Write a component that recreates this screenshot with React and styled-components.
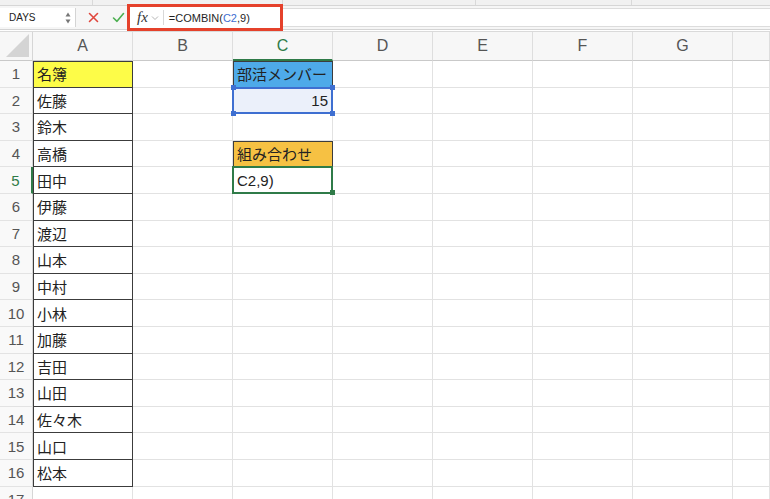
import React from 'react';
import styled, { createGlobalStyle } from 'styled-components';

const GlobalStyle = createGlobalStyle`
  * { box-sizing: border-box; }
  html, body { margin: 0; padding: 0; background: #fff; overflow: hidden; }
  body { font-family: "Liberation Sans", "Noto Sans CJK JP", sans-serif; }
`;

const Page = styled.div`
  width: 770px;
  height: 499px;
  overflow: hidden;
  display: flex;
  flex-direction: column;
`;

const TopStrip = styled.div`
  height: 6px;
  flex: none;
  display: grid;
  grid-template-columns: 93px 190px 193px 156px 1fr;
  background: #f1f1f1;
  border-bottom: 1px solid #d6d6d6;
`;

const StripPart = styled.div`
  border-right: 1px solid #d9d9d9;
  &:last-child { border-right: none; }
`;

const FormulaBar = styled.div`
  height: 24px;
  flex: none;
  display: flex;
  align-items: center;
  background: #f6f6f6;
  border-bottom: 1px solid #d4d4d4;
`;

const NameBox = styled.div`
  width: 76px;
  height: 19px;
  display: flex;
  align-items: center;
  justify-content: space-between;
  padding: 0 4px 0 9px;
  background: #fff;
  border-right: 1px solid #d4d4d4;
  font-size: 10px;
  color: #222;
`;

const IconButton = styled.div`
  width: 25px;
  height: 19px;
  display: flex;
  align-items: center;
  justify-content: center;
`;

const Tools = styled.div`
  display: flex;
  align-items: center;
  padding-left: 5px;
`;

const FxGroup = styled.div`
  width: 150px;
  height: 21px;
  margin-left: -1px;
  display: flex;
  align-items: center;
  background: #fff;
  outline: 3px solid #e5412b;
`;

const FxLabel = styled.span`
  font-family: "Liberation Serif", "DejaVu Serif", serif;
  font-style: italic;
  font-size: 15px;
  color: #333;
  padding: 0 3px 0 7px;
`;

const Divider = styled.span`
  width: 1px;
  height: 15px;
  background: #d8d8d8;
  margin: 0 5px 0 4px;
`;

const FormulaText = styled.span`
  font-size: 11px;
  color: #1f1f1f;
  white-space: nowrap;
`;

const Ref = styled.span`
  color: #3f6fd1;
`;

const FormulaRest = styled.div`
  flex: 1;
  height: 19px;
  margin-left: 3px;
  background: #fff;
  border-top: 1px solid #dcdcdc;
  border-bottom: 1px solid #dcdcdc;
`;

const Sheet = styled.div`
  flex: none;
  display: grid;
  grid-template-columns: 33px repeat(7, 100px) 1fr;
  grid-template-rows: 29px repeat(17, 26.6px);
  border-top: 1px solid #dadada;
  margin-top: 1px;
`;

const Corner = styled.div`
  position: relative;
  background: #f7f7f7;
  border-right: 1px solid #d6d6d6;
  border-bottom: 1px solid #c9c9c9;
`;

const CornerMark = styled.span`
  position: absolute;
  right: 3px;
  bottom: 3px;
  width: 23px;
  height: 23px;
  background: #d4d4d4;
  clip-path: polygon(100% 0, 100% 100%, 0 100%);
`;

const ColHead = styled.div`
  display: flex;
  align-items: center;
  justify-content: center;
  background: #f7f7f7;
  border-right: 1px solid #dedede;
  border-bottom: ${p => (p.$active ? '2px solid #2f7b48' : '1px solid #c9c9c9')};
  color: ${p => (p.$active ? '#2f7b48' : '#555')};
  font-size: 16px;
  padding-top: ${p => (p.$active ? '1px' : '0')};
`;

const RowHead = styled.div`
  display: flex;
  align-items: center;
  justify-content: center;
  background: #f9f9f9;
  border-right: ${p => (p.$active ? '2px solid #2f7b48' : '1px solid #d6d6d6')};
  border-bottom: 1px solid #e3e3e3;
  color: ${p => (p.$active ? '#2f7b48' : '#555')};
  font-size: 15px;
`;

const Cell = styled.div`
  position: relative;
  display: flex;
  align-items: center;
  justify-content: ${p => (p.$align === 'right' ? 'flex-end' : 'flex-start')};
  padding: 0 4px 0 4px;
  background: ${p => p.$fill || '#fff'};
  border-right: 1px solid ${p => (p.$boxed ? '#3c3c3c' : '#e2e2e2')};
  border-bottom: 1px solid ${p => (p.$boxed ? '#3c3c3c' : '#e2e2e2')};
  box-shadow: ${p =>
    p.$boxed
      ? `inset 1px 0 0 #3c3c3c${p.$top ? ', inset 0 1px 0 #3c3c3c' : ''}`
      : 'none'};
  font-size: 15px;
  color: #222;
  white-space: nowrap;
  z-index: ${p => (p.$raised ? 2 : 0)};
`;

const Selection = styled.div`
  position: absolute;
  top: -1px;
  left: -1px;
  right: -1px;
  bottom: -1px;
  border: 2px solid ${p => p.$color};
  pointer-events: none;
`;

const Handle = styled.span`
  position: absolute;
  width: 5px;
  height: 5px;
  background: ${p => p.$color};
  ${p => (p.$v === 'top' ? 'top: -3.5px;' : 'bottom: -3.5px;')}
  ${p => (p.$h === 'left' ? 'left: -3.5px;' : 'right: -3.5px;')}
`;

const COLS = ['A', 'B', 'C', 'D', 'E', 'F', 'G', 'H'];

const names = [
  '名簿', '佐藤', '鈴木', '高橋', '田中', '伊藤', '渡辺', '山本',
  '中村', '小林', '加藤', '吉田', '山田', '佐々木', '山口', '松本',
];

const cells = {
  C1: { text: '部活メンバー', fill: '#4eaae9', boxed: true, top: true },
  C2: { text: '15', fill: '#ebf0fa', align: 'right', select: 'blue' },
  C4: { text: '組み合わせ', fill: '#f6c143', boxed: true, top: true },
  C5: { text: 'C2,9)', select: 'green' },
};
names.forEach((n, i) => {
  cells[`A${i + 1}`] = {
    text: n,
    boxed: true,
    top: i === 0,
    fill: i === 0 ? '#fdfc48' : undefined,
  };
});

const CrossIcon = () => (
  <svg width="11" height="11" viewBox="0 0 11 11">
    <path d="M1.5 1.5 L9.5 9.5 M9.5 1.5 L1.5 9.5" stroke="#e0463c" strokeWidth="1.6" strokeLinecap="round" />
  </svg>
);

const CheckIcon = () => (
  <svg width="13" height="11" viewBox="0 0 13 11">
    <path d="M1.5 6 L5 9.3 L11.5 1.5" stroke="#4caf50" strokeWidth="1.6" fill="none" strokeLinecap="round" strokeLinejoin="round" />
  </svg>
);

const Stepper = () => (
  <svg width="6" height="14" viewBox="0 0 6 14">
    <path d="M0.5 5.5 L3 1.5 L5.5 5.5 Z M0.5 8.5 L3 12.5 L5.5 8.5 Z" fill="#777" />
  </svg>
);

const Chevron = () => (
  <svg width="8" height="6" viewBox="0 0 8 6">
    <path d="M1 1.5 L4 4.5 L7 1.5" stroke="#b5b5b5" strokeWidth="1" fill="none" />
  </svg>
);

const selColor = { blue: '#3e6fd1', green: '#2f7b48' };

const SheetCell = ({ addr }) => {
  const c = cells[addr] || {};
  const color = selColor[c.select];
  return (
    <Cell $fill={c.fill} $align={c.align} $boxed={c.boxed} $top={c.top} $raised={!!c.select}>
      {c.text}
      {c.select && (
        <Selection $color={color}>
          {c.select === 'blue' ? (
            <>
              <Handle $color={color} $v="top" $h="left" />
              <Handle $color={color} $v="top" $h="right" />
              <Handle $color={color} $v="bottom" $h="left" />
              <Handle $color={color} $v="bottom" $h="right" />
            </>
          ) : (
            <Handle $color={color} $v="bottom" $h="right" />
          )}
        </Selection>
      )}
    </Cell>
  );
};

const App = () => {
  const rows = Array.from({ length: 17 }, (_, i) => i + 1);
  return (
    <Page>
      <GlobalStyle />
      <TopStrip>
        <StripPart />
        <StripPart />
        <StripPart />
        <StripPart />
        <StripPart />
      </TopStrip>
      <FormulaBar>
        <NameBox>
          DAYS
          <Stepper />
        </NameBox>
        <Tools>
          <IconButton><CrossIcon /></IconButton>
          <IconButton><CheckIcon /></IconButton>
        </Tools>
        <FxGroup>
          <FxLabel>fx</FxLabel>
          <Chevron />
          <Divider />
          <FormulaText>
            =COMBIN(<Ref>C2</Ref>,9)
          </FormulaText>
        </FxGroup>
        <FormulaRest />
      </FormulaBar>
      <Sheet>
        <Corner><CornerMark /></Corner>
        {COLS.map(col => (
          <ColHead key={col} $active={col === 'C'}>{col === 'H' ? '' : col}</ColHead>
        ))}
        {rows.map(r => (
          <React.Fragment key={r}>
            <RowHead $active={r === 5}>{r}</RowHead>
            {COLS.map(col => (
              <SheetCell key={col + r} addr={col + r} />
            ))}
          </React.Fragment>
        ))}
      </Sheet>
    </Page>
  );
};

export default App;
